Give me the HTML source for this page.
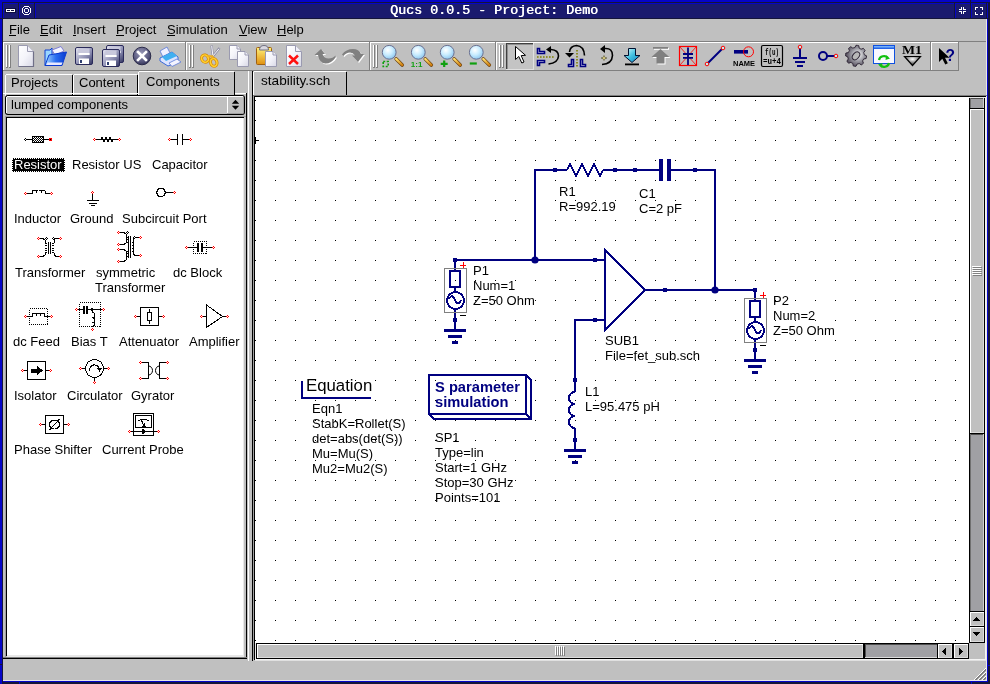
<!DOCTYPE html><html><head><meta charset="utf-8"><style>
*{margin:0;padding:0;box-sizing:border-box}
html,body{width:990px;height:684px;overflow:hidden;background:#c0c0c0;position:relative}
div,span,svg{position:absolute}
.t{font-family:"Liberation Sans",sans-serif;font-size:13px;color:#000;white-space:pre;will-change:transform}
</style></head><body>
<div style="left:0px;top:0px;width:990px;height:684px;background:#0505c8"></div>
<div style="left:988px;top:2px;width:2px;height:682px;background:#15153a"></div>
<div style="left:2px;top:682px;width:988px;height:2px;background:#15153a"></div>
<div style="left:2px;top:2px;width:986px;height:1px;background:#15153a"></div>
<div style="left:2px;top:2px;width:1px;height:680px;background:#15153a"></div>
<div style="left:0px;top:664px;width:2px;height:1px;background:#15153a"></div>
<div style="left:19px;top:682px;width:1px;height:2px;background:#0505c8"></div>
<div style="left:970px;top:0px;width:1px;height:2px;background:#15153a"></div>
<div style="left:986px;top:18px;width:4px;height:1px;background:#15153a"></div>
<div style="left:988px;top:665px;width:2px;height:1px;background:#0505c8"></div>
<div style="left:971px;top:682px;width:1px;height:2px;background:#0505c8"></div>
<div style="left:3px;top:3px;width:984px;height:16px;background:#15153a"></div>
<div style="left:3px;top:3px;width:15px;height:15px;background:#0505c8"></div>
<div style="left:4px;top:4px;width:14px;height:14px;background:#1a1a6e"></div>
<div style="left:19px;top:3px;width:15px;height:15px;background:#0505c8"></div>
<div style="left:20px;top:4px;width:14px;height:14px;background:#1a1a6e"></div>
<div style="left:35px;top:3px;width:919px;height:15px;background:#0505c8"></div>
<div style="left:36px;top:4px;width:918px;height:14px;background:#1a1a6e"></div>
<div style="left:955px;top:3px;width:15px;height:15px;background:#0505c8"></div>
<div style="left:956px;top:4px;width:14px;height:14px;background:#1a1a6e"></div>
<div style="left:971px;top:3px;width:15px;height:15px;background:#0505c8"></div>
<div style="left:972px;top:4px;width:14px;height:14px;background:#1a1a6e"></div>
<div style="left:0px;top:18px;width:3px;height:1px;background:#15153a"></div>
<svg style="left:0px;top:0px" width="990" height="20" shape-rendering="crispEdges"><rect x="5" y="8" width="11" height="5" fill="#0c0c40"/></svg>
<svg style="left:0px;top:0px" width="990" height="20" shape-rendering="crispEdges"><rect x="6" y="9" width="9" height="1" fill="#fff"/><rect x="6" y="11" width="9" height="1" fill="#fff"/><rect x="6" y="9" width="1" height="3" fill="#fff"/><rect x="14" y="9" width="1" height="3" fill="#fff"/><rect x="10" y="10" width="1" height="1" fill="#fff"/></svg>
<svg style="left:0px;top:0px" width="990" height="20" shape-rendering="crispEdges"><rect x="24" y="6" width="5" height="1" fill="#fff"/><rect x="24" y="14" width="5" height="1" fill="#fff"/><rect x="22" y="8" width="1" height="5" fill="#fff"/><rect x="30" y="8" width="1" height="5" fill="#fff"/><rect x="23" y="7" width="1" height="1" fill="#fff"/><rect x="29" y="7" width="1" height="1" fill="#fff"/><rect x="23" y="13" width="1" height="1" fill="#fff"/><rect x="29" y="13" width="1" height="1" fill="#fff"/><rect x="25" y="8" width="3" height="1" fill="#fff"/><rect x="25" y="12" width="3" height="1" fill="#fff"/><rect x="24" y="9" width="1" height="3" fill="#fff"/><rect x="28" y="9" width="1" height="3" fill="#fff"/></svg>
<svg style="left:0px;top:0px" width="990" height="20" shape-rendering="crispEdges"><rect x="961" y="7" width="1" height="3" fill="#fff"/><rect x="959" y="9" width="3" height="1" fill="#fff"/><rect x="963" y="7" width="1" height="3" fill="#fff"/><rect x="963" y="9" width="3" height="1" fill="#fff"/><rect x="961" y="11" width="1" height="3" fill="#fff"/><rect x="959" y="11" width="3" height="1" fill="#fff"/><rect x="963" y="11" width="1" height="3" fill="#fff"/><rect x="963" y="11" width="3" height="1" fill="#fff"/></svg>
<svg style="left:0px;top:0px" width="990" height="20" shape-rendering="crispEdges"><rect x="975" y="7" width="3" height="1" fill="#fff"/><rect x="975" y="7" width="1" height="3" fill="#fff"/><rect x="980" y="7" width="3" height="1" fill="#fff"/><rect x="982" y="7" width="1" height="3" fill="#fff"/><rect x="975" y="14" width="3" height="1" fill="#fff"/><rect x="975" y="12" width="1" height="3" fill="#fff"/><rect x="980" y="14" width="3" height="1" fill="#fff"/><rect x="982" y="12" width="1" height="3" fill="#fff"/></svg>
<span class="t" style="left:390px;top:2.88px;font-size:13.34px;line-height:16px;font-family:'Liberation Mono';color:#fff;font-weight:normal;text-shadow:0.6px 0 0 #fff">Qucs 0.0.5 - Project: Demo</span>
<div style="left:3px;top:19px;width:984px;height:662px;background:#e8e8e8"></div>
<div style="left:3px;top:19px;width:983px;height:661px;background:#c0c0c0"></div>
<div style="left:3px;top:41px;width:983px;height:1px;background:#808080"></div>
<span class="t" style="left:9px;top:21.50px;font-size:13px;line-height:16px;font-family:'Liberation Sans';">File</span>
<span class="t" style="left:40px;top:21.50px;font-size:13px;line-height:16px;font-family:'Liberation Sans';">Edit</span>
<span class="t" style="left:73px;top:21.50px;font-size:13px;line-height:16px;font-family:'Liberation Sans';">Insert</span>
<span class="t" style="left:116px;top:21.50px;font-size:13px;line-height:16px;font-family:'Liberation Sans';">Project</span>
<span class="t" style="left:167px;top:21.50px;font-size:13px;line-height:16px;font-family:'Liberation Sans';">Simulation</span>
<span class="t" style="left:239px;top:21.50px;font-size:13px;line-height:16px;font-family:'Liberation Sans';">View</span>
<span class="t" style="left:277px;top:21.50px;font-size:13px;line-height:16px;font-family:'Liberation Sans';">Help</span>
<div style="left:9px;top:35px;width:7px;height:1px;background:#000"></div>
<div style="left:40px;top:35px;width:8px;height:1px;background:#000"></div>
<div style="left:73px;top:35px;width:3px;height:1px;background:#000"></div>
<div style="left:116px;top:35px;width:8px;height:1px;background:#000"></div>
<div style="left:167px;top:35px;width:8px;height:1px;background:#000"></div>
<div style="left:239px;top:35px;width:8px;height:1px;background:#000"></div>
<div style="left:277px;top:35px;width:9px;height:1px;background:#000"></div>
<div style="left:3px;top:42px;width:183px;height:1px;background:#ffffff"></div>
<div style="left:3px;top:42px;width:1px;height:29px;background:#ffffff"></div>
<div style="left:3px;top:70px;width:183px;height:1px;background:#808080"></div>
<div style="left:185px;top:42px;width:1px;height:29px;background:#808080"></div>
<div style="left:6px;top:45px;width:2px;height:23px;background:#808080"></div>
<div style="left:6px;top:45px;width:1px;height:22px;background:#ffffff"></div>
<div style="left:9px;top:45px;width:2px;height:23px;background:#808080"></div>
<div style="left:9px;top:45px;width:1px;height:22px;background:#ffffff"></div>
<div style="left:186px;top:42px;width:184px;height:1px;background:#ffffff"></div>
<div style="left:186px;top:42px;width:1px;height:29px;background:#ffffff"></div>
<div style="left:186px;top:70px;width:184px;height:1px;background:#808080"></div>
<div style="left:369px;top:42px;width:1px;height:29px;background:#808080"></div>
<div style="left:189px;top:45px;width:2px;height:23px;background:#808080"></div>
<div style="left:189px;top:45px;width:1px;height:22px;background:#ffffff"></div>
<div style="left:192px;top:45px;width:2px;height:23px;background:#808080"></div>
<div style="left:192px;top:45px;width:1px;height:22px;background:#ffffff"></div>
<div style="left:370px;top:42px;width:126px;height:1px;background:#ffffff"></div>
<div style="left:370px;top:42px;width:1px;height:29px;background:#ffffff"></div>
<div style="left:370px;top:70px;width:126px;height:1px;background:#808080"></div>
<div style="left:495px;top:42px;width:1px;height:29px;background:#808080"></div>
<div style="left:373px;top:45px;width:2px;height:23px;background:#808080"></div>
<div style="left:373px;top:45px;width:1px;height:22px;background:#ffffff"></div>
<div style="left:376px;top:45px;width:2px;height:23px;background:#808080"></div>
<div style="left:376px;top:45px;width:1px;height:22px;background:#ffffff"></div>
<div style="left:496px;top:42px;width:435px;height:1px;background:#ffffff"></div>
<div style="left:496px;top:42px;width:1px;height:29px;background:#ffffff"></div>
<div style="left:496px;top:70px;width:435px;height:1px;background:#808080"></div>
<div style="left:930px;top:42px;width:1px;height:29px;background:#808080"></div>
<div style="left:499px;top:45px;width:2px;height:23px;background:#808080"></div>
<div style="left:499px;top:45px;width:1px;height:22px;background:#ffffff"></div>
<div style="left:502px;top:45px;width:2px;height:23px;background:#808080"></div>
<div style="left:502px;top:45px;width:1px;height:22px;background:#ffffff"></div>
<div style="left:931px;top:42px;width:28px;height:1px;background:#ffffff"></div>
<div style="left:931px;top:42px;width:1px;height:29px;background:#ffffff"></div>
<div style="left:931px;top:70px;width:28px;height:1px;background:#808080"></div>
<div style="left:958px;top:42px;width:1px;height:29px;background:#808080"></div>
<div style="left:506px;top:43px;width:28px;height:27px;background:#c4c4c4"></div>
<div style="left:506px;top:43px;width:28px;height:1px;background:#404040"></div>
<div style="left:506px;top:43px;width:1px;height:27px;background:#404040"></div>
<div style="left:506px;top:69px;width:28px;height:1px;background:#e0e0e0"></div>
<div style="left:533px;top:43px;width:1px;height:27px;background:#e0e0e0"></div>
<div style="left:507px;top:44px;width:26px;height:1px;background:#909090"></div>
<div style="left:507px;top:44px;width:1px;height:25px;background:#909090"></div>
<svg style="left:0px;top:0px" width="990" height="72" viewBox="0 0 990 72"><defs>
<linearGradient id="paper" x1="0" y1="0" x2="1" y2="1"><stop offset="0" stop-color="#ffffff"/><stop offset="0.5" stop-color="#f4f4fa"/><stop offset="1" stop-color="#d8d8e6"/></linearGradient>
<linearGradient id="folder" x1="0" y1="0" x2="1" y2="0"><stop offset="0" stop-color="#a8dcff"/><stop offset="0.5" stop-color="#2a6ef0"/><stop offset="1" stop-color="#0a3ad0"/></linearGradient>
<linearGradient id="floppy" x1="0" y1="0" x2="1" y2="1"><stop offset="0" stop-color="#e8e8f4"/><stop offset="0.6" stop-color="#8a8cb0"/><stop offset="1" stop-color="#30325e"/></linearGradient>
<radialGradient id="closeg" cx="0.45" cy="0.35" r="0.7"><stop offset="0" stop-color="#9a9ab8"/><stop offset="0.7" stop-color="#54547a"/><stop offset="1" stop-color="#2a2a4a"/></radialGradient>
<radialGradient id="lens" cx="0.4" cy="0.35" r="0.7"><stop offset="0" stop-color="#ffffff"/><stop offset="0.5" stop-color="#c8ecff"/><stop offset="1" stop-color="#88c4ee"/></radialGradient>
<linearGradient id="gold" x1="0" y1="0" x2="1" y2="1"><stop offset="0" stop-color="#ffe070"/><stop offset="1" stop-color="#d08010"/></linearGradient>
<linearGradient id="clip" x1="0" y1="0" x2="0" y2="1"><stop offset="0" stop-color="#fff27a"/><stop offset="1" stop-color="#e09010"/></linearGradient>
<linearGradient id="cyan" x1="0" y1="0" x2="1" y2="1"><stop offset="0" stop-color="#e0ffff"/><stop offset="0.5" stop-color="#40c0e0"/><stop offset="1" stop-color="#1080c0"/></linearGradient>
<radialGradient id="gear" cx="0.6" cy="0.45" r="0.65"><stop offset="0" stop-color="#ffffff"/><stop offset="0.45" stop-color="#a0a0a8"/><stop offset="1" stop-color="#403848"/></radialGradient>
<radialGradient id="tri" cx="0.5" cy="0.3" r="0.6"><stop offset="0" stop-color="#ffffff"/><stop offset="1" stop-color="#404040"/></radialGradient>
<linearGradient id="winbar" x1="0" y1="0" x2="0" y2="1"><stop offset="0" stop-color="#8ac4ff"/><stop offset="1" stop-color="#1050e0"/></linearGradient>
</defs>
<path d="M18.5 45.5 L27.5 45.5 L33.5 51.5 L33.5 66.5 L18.5 66.5 Z" fill="url(#paper)" stroke="#9a9ab0" stroke-width="1"/>
<path d="M27.5 45.5 L27.5 51.5 L33.5 51.5" fill="#f0f0f8" stroke="#9a9ab0" stroke-width="1"/>
<path d="M18.5 66.5 L33.5 66.5 L33.5 51.5" stroke="#707088" stroke-width="1.2" fill="none"/>
<path d="M45 50 L50 50 L52 48 L52 65.5 L45 65.5 Z" fill="#9ad6ff" stroke="#1040d0" stroke-width="1"/>
<path d="M52 50 L61 46.5 L64 51 L55 55 Z" fill="#f4f4ff" stroke="#6a6ad0" stroke-width="0.8"/>
<path d="M49 55 L66.5 52 L62 65.5 L45 65.5 Z" fill="url(#folder)" stroke="#0a3ad0" stroke-width="1"/>
<path d="M47.5 62.5 L62.5 62.5 L61.5 65 L46.5 65 Z" fill="#e8e8ff"/>
<rect x="75.5" y="47.5" width="17" height="17" rx="1.5" fill="url(#floppy)" stroke="#2a2a5a" stroke-width="1"/>
<rect x="78.5" y="48.5" width="11" height="6.5" fill="#c8c8dc"/>
<rect x="78.5" y="53.0" width="11" height="2" fill="#ffffff"/>
<rect x="79.0" y="58.5" width="10" height="5.5" fill="#ffffff"/>
<rect x="80.0" y="60.0" width="2" height="3" fill="#304070"/>
<rect x="106.5" y="45.5" width="17" height="17" rx="1.5" fill="url(#floppy)" stroke="#2a2a5a" stroke-width="1"/>
<rect x="109.5" y="46.5" width="11" height="6.5" fill="#c8c8dc"/>
<rect x="109.5" y="51.0" width="11" height="2" fill="#ffffff"/>
<rect x="110.0" y="56.5" width="10" height="5.5" fill="#ffffff"/>
<rect x="111.0" y="58.0" width="2" height="3" fill="#304070"/>
<rect x="102.5" y="49.5" width="17" height="17" rx="1.5" fill="url(#floppy)" stroke="#2a2a5a" stroke-width="1"/>
<rect x="105.5" y="50.5" width="11" height="6.5" fill="#c8c8dc"/>
<rect x="105.5" y="55.0" width="11" height="2" fill="#ffffff"/>
<rect x="106.0" y="60.5" width="10" height="5.5" fill="#ffffff"/>
<rect x="107.0" y="62.0" width="2" height="3" fill="#304070"/>
<circle cx="142" cy="56" r="8.8" fill="url(#closeg)" stroke="#2a2a4a" stroke-width="1"/>
<path d="M138 52 L146 60 M146 52 L138 60" stroke="#ffffff" stroke-width="2.6" stroke-linecap="square"/>
<path d="M160 51 L167 47 L171 55 L164 59 Z" fill="#f0f0ff" stroke="#5a7ad8" stroke-width="0.8"/>
<path d="M160 58 L172 52 L178 57 L178 62 L168 66 L160 61 Z" fill="#dde4ff" stroke="#3a6ad8" stroke-width="1"/>
<path d="M162 57 L172 52 L177 56 L166 61 Z" fill="#40b0f0"/>
<path d="M169 63 L177 59 L181 62 L172 66.5 Z" fill="#f4f4ff" stroke="#5a7ad8" stroke-width="0.8"/>
<path d="M211.5 45.5 L213 56.5" stroke="#9090a8" stroke-width="2.4" fill="none"/>
<path d="M219.5 48 L212 57.5" stroke="#9090a8" stroke-width="2.4" fill="none"/>
<path d="M211.7 46 L212.8 55 M219 48.8 L213 56" stroke="#ffffff" stroke-width="0.9" fill="none"/>
<ellipse cx="205" cy="58.6" rx="3.3" ry="3.8" transform="rotate(-35 205 58.6)" fill="none" stroke="#d88a00" stroke-width="3"/>
<ellipse cx="205" cy="58.6" rx="3.3" ry="3.8" transform="rotate(-35 205 58.6)" fill="none" stroke="#ffd030" stroke-width="1.6"/>
<ellipse cx="213.7" cy="62.4" rx="3.2" ry="4" transform="rotate(-20 213.7 62.4)" fill="none" stroke="#d88a00" stroke-width="3"/>
<ellipse cx="213.7" cy="62.4" rx="3.2" ry="4" transform="rotate(-20 213.7 62.4)" fill="none" stroke="#ffd030" stroke-width="1.6"/>
<path d="M207.5 56 L212.5 56.5 L212.5 58.5" stroke="#f0b020" stroke-width="2.2" fill="none"/>
<path d="M229.5 45.5 L237.0 45.5 L240.5 49.0 L240.5 59.5 L229.5 59.5 Z" fill="url(#paper)" stroke="#9a9ab0" stroke-width="1"/>
<path d="M237.0 45.5 L237.0 49.0 L240.5 49.0" fill="#f0f0f8" stroke="#9a9ab0" stroke-width="1"/>
<path d="M237.5 51.5 L245.0 51.5 L248.5 55.0 L248.5 66.5 L237.5 66.5 Z" fill="url(#paper)" stroke="#9a9ab0" stroke-width="1"/>
<path d="M245.0 51.5 L245.0 55.0 L248.5 55.0" fill="#f0f0f8" stroke="#9a9ab0" stroke-width="1"/>
<rect x="256.5" y="47.5" width="15" height="17" rx="1" fill="url(#clip)" stroke="#a06010" stroke-width="1"/>
<path d="M259.5 50 Q259.5 45.5 264 45.5 Q268.5 45.5 268.5 50 Z" fill="#d8d8e0" stroke="#707080" stroke-width="1"/>
<path d="M265.5 51.5 L273.0 51.5 L276.5 55.0 L276.5 66.5 L265.5 66.5 Z" fill="url(#paper)" stroke="#9a9ab0" stroke-width="1"/>
<path d="M273.0 51.5 L273.0 55.0 L276.5 55.0" fill="#f0f0f8" stroke="#9a9ab0" stroke-width="1"/>
<path d="M286.5 45.5 L295.5 45.5 L301.5 51.5 L301.5 66.5 L286.5 66.5 Z" fill="url(#paper)" stroke="#9a9ab0" stroke-width="1"/>
<path d="M295.5 45.5 L295.5 51.5 L301.5 51.5" fill="#f0f0f8" stroke="#9a9ab0" stroke-width="1"/>
<path d="M289 55.5 L298 64 M298 55.5 L289 64" stroke="#ff1010" stroke-width="2.5"/>
<g transform="translate(314.5,49)"><path d="M0 6 L6.5 0 L10.5 5 L8 5 Q10 9.5 14 9.5 Q18.5 9.5 21 6.5 L21 8.5 Q17 14.5 11 14.5 Q5 14.5 3.5 6 Z" transform="translate(1,1)" fill="#ffffff"/><path d="M0 6 L6.5 0 L10.5 5 L8 5 Q10 9.5 14 9.5 Q18.5 9.5 21 6.5 L21 8.5 Q17 14.5 11 14.5 Q5 14.5 3.5 6 Z" fill="#808080"/></g>
<g transform="translate(342,49)"><path d="M0 5.5 Q4 0 11 0 Q17 0 19 5 L22 5 L16 13 L10 6.5 L13 6.5 Q11 3.5 8 3.5 Q4 3.5 1.5 7 Z" transform="translate(1,1)" fill="#fff"/><path d="M0 5.5 Q4 0 11 0 Q17 0 19 5 L22 5 L16 13 L10 6.5 L13 6.5 Q11 3.5 8 3.5 Q4 3.5 1.5 7 Z" fill="#808080"/></g>
<path d="M396.2 59 L402.2 65" stroke="#6a4010" stroke-width="3.6" stroke-linecap="round"/>
<path d="M396.2 59 L402.2 65" stroke="url(#gold)" stroke-width="2.4" stroke-linecap="round"/>
<circle cx="389.2" cy="52.3" r="6.9" fill="url(#lens)" stroke="#6a7090" stroke-width="1"/>
<rect x="383.2" y="61.5" width="5" height="5" fill="none" stroke="#10a010" stroke-width="1.6" stroke-dasharray="2 1.5"/>
<path d="M425.3 59 L431.3 65" stroke="#6a4010" stroke-width="3.6" stroke-linecap="round"/>
<path d="M425.3 59 L431.3 65" stroke="url(#gold)" stroke-width="2.4" stroke-linecap="round"/>
<circle cx="418.3" cy="52.3" r="6.9" fill="url(#lens)" stroke="#6a7090" stroke-width="1"/>
<text x="410.8" y="67" font-family="Liberation Sans" font-weight="bold" font-size="8" fill="#10a010">1:1</text>
<path d="M454.2 59 L460.2 65" stroke="#6a4010" stroke-width="3.6" stroke-linecap="round"/>
<path d="M454.2 59 L460.2 65" stroke="url(#gold)" stroke-width="2.4" stroke-linecap="round"/>
<circle cx="447.2" cy="52.3" r="6.9" fill="url(#lens)" stroke="#6a7090" stroke-width="1"/>
<path d="M444.2 60.5 L444.2 67 M440.7 63.8 L447.7 63.8" stroke="#10a010" stroke-width="2.2"/>
<path d="M483.3 59 L489.3 65" stroke="#6a4010" stroke-width="3.6" stroke-linecap="round"/>
<path d="M483.3 59 L489.3 65" stroke="url(#gold)" stroke-width="2.4" stroke-linecap="round"/>
<circle cx="476.3" cy="52.3" r="6.9" fill="url(#lens)" stroke="#6a7090" stroke-width="1"/>
<path d="M469.8 63.5 L476.8 63.5" stroke="#10a010" stroke-width="2.2"/>
<path d="M515.5 46.5 L515.5 59.5 L518.8 56.5 L521.8 63 L524 62 L521.2 55.6 L525.5 55.3 Z" fill="#ffffff" stroke="#000" stroke-width="1"/>
<path d="M537.5 48.5 L539.5 48.5 L539.5 51.5 L544.5 51.5 L544.5 53.5 L537.5 53.5 Z" fill="#fff" stroke="#000080" stroke-width="1.6"/>
<path d="M537.5 65.5 L539.5 65.5 L539.5 62.5 L544.5 62.5 L544.5 60.5 L537.5 60.5 Z" fill="#fff" stroke="#000080" stroke-width="1.6"/>
<path d="M537 57 L554 57" stroke="#808000" stroke-width="1.6" stroke-dasharray="1.6 1.4"/>
<path d="M548.5 64 Q558 63 558.5 56 Q558.5 50 551 49.5" stroke="#000" stroke-width="1.6" fill="none"/>
<path d="M546 49.5 L551 46 L551 53 Z" fill="#000"/>
<path d="M573.5 59.5 L573.5 66.5 L568.5 66.5 L568.5 64.5 L571.5 64.5 L571.5 59.5 Z" fill="#fff" stroke="#000080" stroke-width="1.6"/>
<path d="M580.5 59.5 L580.5 66.5 L585.5 66.5 L585.5 64.5 L582.5 64.5 L582.5 59.5 Z" fill="#fff" stroke="#000080" stroke-width="1.6"/>
<path d="M577 50 L577 67" stroke="#808000" stroke-width="1.6" stroke-dasharray="1.6 1.4"/>
<path d="M584.5 55.5 Q584 46 576.5 45.5 Q570 46 569.5 52" stroke="#000" stroke-width="1.6" fill="none"/>
<path d="M565 53 L574 53 L569.5 57.5 Z" fill="#000"/>
<path d="M602 64.5 Q612 64 612.5 55.5 Q612.5 48 605 48.5" stroke="#000" stroke-width="1.6" fill="none"/>
<path d="M600 49 L605 45 L605 53 Z" fill="#000"/>
<path d="M604 55.5 L605 57.5 L607 58 L605 58.7 L604 60.5 L603 58.7 L601 58 L603 57.5 Z" fill="#e0d080" stroke="#404020" stroke-width="0.5"/>
<path d="M628.5 48.5 L635.5 48.5 L635.5 55.5 L640 55.5 L632 62.5 L624 55.5 L628.5 55.5 Z" fill="url(#cyan)" stroke="#001030" stroke-width="1"/>
<rect x="625" y="63.5" width="14" height="1.8" fill="#000"/>
<g transform="translate(1,1)"><rect x="653" y="47" width="15" height="1.8" fill="#fff"/><path d="M651.5 57 L660.5 49 L669.5 57 L664.5 57 L664.5 63.5 L656.5 63.5 L656.5 57 Z" fill="#fff"/></g>
<g transform="translate(0,0)"><rect x="653" y="47" width="15" height="1.8" fill="#808080"/><path d="M651.5 57 L660.5 49 L669.5 57 L664.5 57 L664.5 63.5 L656.5 63.5 L656.5 57 Z" fill="#808080"/></g>
<rect x="679.5" y="46.5" width="17" height="19" fill="none" stroke="#ff0000" stroke-width="1.2"/>
<path d="M680 47 L696 65 M696 47 L680 65" stroke="#ff0000" stroke-width="0.8"/>
<path d="M688 47.5 L688 65 M683 54 L693 54 M683 57.8 L693 57.8" stroke="#000080" stroke-width="1.8"/>
<path d="M707.5 63.5 L723 48" stroke="#000080" stroke-width="2"/>
<circle cx="707" cy="64" r="1.8" fill="#c0f0f0" stroke="#ff0000" stroke-width="1"/>
<circle cx="723" cy="48" r="1.8" fill="#c0f0f0" stroke="#ff0000" stroke-width="1"/>
<rect x="734" y="50" width="14" height="3.6" fill="#000080"/>
<circle cx="748.5" cy="51.8" r="5" fill="none" stroke="#ff0000" stroke-width="1"/>
<text x="733" y="66" font-family="Liberation Sans" font-weight="bold" font-size="7.6" fill="#000" textLength="22" lengthAdjust="spacingAndGlyphs">NAME</text>
<rect x="761.5" y="45.5" width="21" height="21" rx="1.5" fill="none" stroke="#000" stroke-width="1.2"/>
<text x="765" y="55" font-family="Liberation Mono" font-weight="bold" font-size="8.5" fill="#000" textLength="14" lengthAdjust="spacingAndGlyphs">f(u)</text>
<text x="763" y="64" font-family="Liberation Mono" font-weight="bold" font-size="8.5" fill="#000" textLength="18" lengthAdjust="spacingAndGlyphs">=u+4</text>
<path d="M800 48 L800 58 M793 58 L807 58 M795 62 L805 62 M797 66 L803 66" stroke="#000080" stroke-width="2"/>
<circle cx="800" cy="47" r="1.8" fill="#c0f0f0" stroke="#ff0000" stroke-width="1"/>
<circle cx="823" cy="56" r="4" fill="none" stroke="#000080" stroke-width="2"/>
<path d="M827 56 L834 56" stroke="#000080" stroke-width="2"/>
<circle cx="836" cy="56" r="1.8" fill="#c0f0f0" stroke="#ff0000" stroke-width="1"/>
<path d="M866.50 55.80 L866.41 57.17 L866.14 58.52 L863.67 58.98 L863.19 59.95 L862.58 60.85 L863.42 63.22 L862.39 64.13 L861.25 64.89 L859.18 63.47 L858.15 63.82 L857.08 64.03 L856.00 66.30 L854.63 66.21 L853.28 65.94 L852.82 63.47 L851.85 62.99 L850.95 62.38 L848.58 63.22 L847.67 62.19 L846.91 61.05 L848.33 58.98 L847.98 57.95 L847.77 56.88 L845.50 55.80 L845.59 54.43 L845.86 53.08 L848.33 52.62 L848.81 51.65 L849.42 50.75 L848.58 48.38 L849.61 47.47 L850.75 46.71 L852.82 48.13 L853.85 47.78 L854.92 47.57 L856.00 45.30 L857.37 45.39 L858.72 45.66 L859.18 48.13 L860.15 48.61 L861.05 49.22 L863.42 48.38 L864.33 49.41 L865.09 50.55 L863.67 52.62 L864.02 53.65 L864.23 54.72 Z" fill="url(#gear)" stroke="#302838" stroke-width="1"/>
<ellipse cx="856" cy="55.8" rx="3" ry="4.5" transform="rotate(40 856 55.8)" fill="#b8b8b8" stroke="#302838" stroke-width="1"/>
<rect x="873.5" y="45.5" width="21" height="18" fill="#f8f8ff" stroke="#1050e0" stroke-width="1"/>
<rect x="874" y="46" width="20" height="3" fill="url(#winbar)"/>
<path d="M879 60 A5 4.5 0 0 1 888 58" stroke="#10c010" stroke-width="2.2" fill="none"/><path d="M886 55.5 L890 58.5 L885.5 60 Z" fill="#10c010"/>
<path d="M889 63 A5 4.5 0 0 1 880 65" stroke="#10c010" stroke-width="2.2" fill="none"/><path d="M882 67.5 L878 64.5 L882.5 63 Z" fill="#10c010"/>
<text x="902" y="54" font-family="Liberation Serif" font-weight="bold" font-size="12.5" fill="#000" textLength="20" lengthAdjust="spacingAndGlyphs">M1</text>
<path d="M904.5 56.5 L920.5 56.5 L912.5 65.5 Z" fill="url(#tri)" stroke="#000" stroke-width="1.2"/>
<path d="M939 48 L939 62 L942.3 58.8 L945.3 64.5 L947.8 63.3 L945 57.8 L949.5 57.8 Z" fill="#000"/>
<text x="945.5" y="61" font-family="Liberation Sans" font-weight="bold" font-size="16" fill="#000080" textLength="9.5" lengthAdjust="spacingAndGlyphs">?</text></svg>
<div style="left:5px;top:74px;width:68px;height:22px;background:#c0c0c0"></div>
<div style="left:6px;top:74px;width:66px;height:1px;background:#ffffff"></div>
<div style="left:5px;top:75px;width:1px;height:22px;background:#ffffff"></div>
<div style="left:72px;top:75px;width:1px;height:21px;background:#000"></div>
<span class="t" style="left:11px;top:74.50px;font-size:13px;line-height:16px;font-family:'Liberation Sans';">Projects</span>
<div style="left:73px;top:74px;width:65px;height:22px;background:#c0c0c0"></div>
<div style="left:74px;top:74px;width:63px;height:1px;background:#ffffff"></div>
<div style="left:73px;top:75px;width:1px;height:22px;background:#ffffff"></div>
<div style="left:137px;top:75px;width:1px;height:21px;background:#000"></div>
<span class="t" style="left:79px;top:74.50px;font-size:13px;line-height:16px;font-family:'Liberation Sans';">Content</span>
<div style="left:138px;top:71px;width:97px;height:25px;background:#c0c0c0"></div>
<div style="left:139px;top:71px;width:95px;height:1px;background:#ffffff"></div>
<div style="left:138px;top:72px;width:1px;height:25px;background:#ffffff"></div>
<div style="left:234px;top:72px;width:1px;height:24px;background:#000"></div>
<span class="t" style="left:146px;top:73.50px;font-size:13px;line-height:16px;font-family:'Liberation Sans';">Components</span>
<div style="left:5px;top:95px;width:240px;height:20px;background:#000;border-radius:3px"></div>
<div style="left:6px;top:96px;width:238px;height:18px;background:#c0c0c0;border-radius:2px"></div>
<div style="left:7px;top:96px;width:220px;height:1px;background:#ffffff"></div>
<div style="left:6px;top:97px;width:1px;height:16px;background:#ffffff"></div>
<div style="left:227px;top:96px;width:17px;height:18px;background:#a0a0a0;border-radius:0 2px 2px 0"></div>
<div style="left:227px;top:96px;width:16px;height:17px;background:#c0c0c0"></div>
<div style="left:227px;top:96px;width:16px;height:1px;background:#ffffff"></div>
<div style="left:227px;top:96px;width:1px;height:17px;background:#ffffff"></div>
<span class="t" style="left:11px;top:96.50px;font-size:13px;line-height:16px;font-family:'Liberation Sans';">lumped components</span>
<svg style="left:228px;top:97px" width="14" height="16"><path d="M3.8 6.8 L7.5 2.8 L11.2 6.8 Z M3.8 8.8 L7.5 12.8 L11.2 8.8 Z" fill="#000"/></svg>
<div style="left:3px;top:93px;width:136px;height:1px;background:#ffffff"></div>
<div style="left:235px;top:93px;width:11px;height:1px;background:#ffffff"></div>
<div style="left:246px;top:93px;width:1px;height:566px;background:#000"></div>
<div style="left:3px;top:658px;width:244px;height:1px;background:#000"></div>
<div style="left:5px;top:116px;width:241px;height:542px;background:#a0a0a0"></div>
<div style="left:6px;top:117px;width:240px;height:541px;background:#c0c0c0"></div>
<div style="left:6px;top:117px;width:238px;height:539px;background:#000"></div>
<div style="left:7px;top:118px;width:237px;height:537px;background:#fff"></div>
<div style="left:7px;top:655px;width:237px;height:2px;background:#e8e8e8"></div>
<div style="left:243px;top:118px;width:1px;height:539px;background:#e8e8e8"></div>
<div style="left:3px;top:657px;width:244px;height:1px;background:#808080"></div>
<div style="left:3px;top:658px;width:244px;height:1px;background:#000"></div>
<svg style="left:0px;top:0px" width="250" height="660" viewBox="0 0 250 660" shape-rendering="crispEdges"><defs><pattern id="chk" x="0" y="0" width="2" height="2" patternUnits="userSpaceOnUse"><rect width="2" height="2" fill="#000"/><rect x="0" y="0" width="1" height="1" fill="#fff"/><rect x="1" y="1" width="1" height="1" fill="#fff"/></pattern></defs>
<line x1="27" y1="139.5" x2="32" y2="139.5" stroke="#000" stroke-width="1"/>
<line x1="44" y1="139.5" x2="49" y2="139.5" stroke="#000" stroke-width="1"/>
<rect x="32" y="136" width="12" height="7" fill="#000"/>
<rect x="33" y="137" width="10" height="5" fill="url(#chk)"/>
<rect x="25" y="139" width="1" height="1" fill="#fff"/>
<rect x="24" y="139" width="1" height="1" fill="#000"/>
<rect x="26" y="139" width="1" height="1" fill="#000"/>
<rect x="25" y="138" width="1" height="1" fill="#000"/>
<rect x="25" y="140" width="1" height="1" fill="#000"/>
<rect x="50" y="139" width="1" height="1" fill="#fff"/>
<rect x="49" y="139" width="1" height="1" fill="#ff0000"/>
<rect x="51" y="139" width="1" height="1" fill="#ff0000"/>
<rect x="50" y="138" width="1" height="1" fill="#ff0000"/>
<rect x="50" y="140" width="1" height="1" fill="#ff0000"/>
<rect x="49" y="138" width="3" height="3" fill="#f00"/><rect x="50" y="139" width="1" height="1" fill="#000"/>
<line x1="96" y1="139.5" x2="101" y2="139.5" stroke="#000" stroke-width="1"/>
<line x1="113" y1="139.5" x2="118" y2="139.5" stroke="#000" stroke-width="1"/>
<path d="M101 139.5 L102 137 L104 142 L106 137 L108 142 L110 137 L112 142 L113 139.5" stroke="#000" stroke-width="1" fill="none" />
<rect x="94" y="139" width="1" height="1" fill="#fff"/>
<rect x="93" y="139" width="1" height="1" fill="#ff0000"/>
<rect x="95" y="139" width="1" height="1" fill="#ff0000"/>
<rect x="94" y="138" width="1" height="1" fill="#ff0000"/>
<rect x="94" y="140" width="1" height="1" fill="#ff0000"/>
<rect x="119" y="139" width="1" height="1" fill="#fff"/>
<rect x="118" y="139" width="1" height="1" fill="#ff0000"/>
<rect x="120" y="139" width="1" height="1" fill="#ff0000"/>
<rect x="119" y="138" width="1" height="1" fill="#ff0000"/>
<rect x="119" y="140" width="1" height="1" fill="#ff0000"/>
<line x1="171" y1="139.5" x2="177.5" y2="139.5" stroke="#000" stroke-width="1"/>
<line x1="182.5" y1="139.5" x2="189" y2="139.5" stroke="#000" stroke-width="1"/>
<line x1="177.5" y1="134" x2="177.5" y2="145" stroke="#000" stroke-width="1.5"/>
<line x1="182.5" y1="134" x2="182.5" y2="145" stroke="#000" stroke-width="1.5"/>
<rect x="169" y="139" width="1" height="1" fill="#fff"/>
<rect x="168" y="139" width="1" height="1" fill="#ff0000"/>
<rect x="170" y="139" width="1" height="1" fill="#ff0000"/>
<rect x="169" y="138" width="1" height="1" fill="#ff0000"/>
<rect x="169" y="140" width="1" height="1" fill="#ff0000"/>
<rect x="190" y="139" width="1" height="1" fill="#fff"/>
<rect x="189" y="139" width="1" height="1" fill="#ff0000"/>
<rect x="191" y="139" width="1" height="1" fill="#ff0000"/>
<rect x="190" y="138" width="1" height="1" fill="#ff0000"/>
<rect x="190" y="140" width="1" height="1" fill="#ff0000"/>
<line x1="27" y1="193.5" x2="32" y2="193.5" stroke="#000" stroke-width="1"/>
<line x1="45" y1="193.5" x2="50" y2="193.5" stroke="#000" stroke-width="1"/>
<path d="M32 193.5 L32 191 Q33 189.5 36.5 190.5 L36.5 193 M36.5 190.5 Q38 189.5 41 190.5 L41 193 M41 190.5 Q43 189.5 45 191 L45 193.5" stroke="#000" stroke-width="1" fill="none" />
<rect x="25" y="193" width="1" height="1" fill="#fff"/>
<rect x="24" y="193" width="1" height="1" fill="#ff0000"/>
<rect x="26" y="193" width="1" height="1" fill="#ff0000"/>
<rect x="25" y="192" width="1" height="1" fill="#ff0000"/>
<rect x="25" y="194" width="1" height="1" fill="#ff0000"/>
<rect x="51" y="193" width="1" height="1" fill="#fff"/>
<rect x="50" y="193" width="1" height="1" fill="#ff0000"/>
<rect x="52" y="193" width="1" height="1" fill="#ff0000"/>
<rect x="51" y="192" width="1" height="1" fill="#ff0000"/>
<rect x="51" y="194" width="1" height="1" fill="#ff0000"/>
<line x1="92.5" y1="194" x2="92.5" y2="200" stroke="#000" stroke-width="1"/>
<line x1="86.5" y1="200.5" x2="98.5" y2="200.5" stroke="#000" stroke-width="1"/>
<line x1="88.5" y1="203.5" x2="96.5" y2="203.5" stroke="#000" stroke-width="1"/>
<line x1="90.5" y1="205.5" x2="94.5" y2="205.5" stroke="#000" stroke-width="1"/>
<rect x="92" y="192" width="1" height="1" fill="#fff"/>
<rect x="91" y="192" width="1" height="1" fill="#ff0000"/>
<rect x="93" y="192" width="1" height="1" fill="#ff0000"/>
<rect x="92" y="191" width="1" height="1" fill="#ff0000"/>
<rect x="92" y="193" width="1" height="1" fill="#ff0000"/>
<circle cx="161" cy="192.5" r="4.2" stroke="#000" stroke-width="1.2" fill="none"/>
<line x1="165.2" y1="192.5" x2="173" y2="192.5" stroke="#000" stroke-width="1"/>
<rect x="174" y="192" width="1" height="1" fill="#fff"/>
<rect x="173" y="192" width="1" height="1" fill="#ff0000"/>
<rect x="175" y="192" width="1" height="1" fill="#ff0000"/>
<rect x="174" y="191" width="1" height="1" fill="#ff0000"/>
<rect x="174" y="193" width="1" height="1" fill="#ff0000"/>
<path d="M39.5 238.5 L43 238.5 L45 240 L45 243 M54 243 L54 240 L56 238.5 L59.5 238.5 M39.5 256.5 L43 256.5 L45 255 L45 252.5 M54 252.5 L54 255 L56 256.5 L59.5 256.5" stroke="#000" stroke-width="1" fill="none" />
<path d="M45 243 L47 243 M45 245.5 L47 245.5 M45 248 L47 248 M45 250.5 L47 250.5 M45 252.5 L47 252.5" stroke="#000" stroke-width="1" fill="none" />
<path d="M52 243 L54 243 M52 245.5 L54 245.5 M52 248 L54 248 M52 250.5 L54 250.5 M52 252.5 L54 252.5" stroke="#000" stroke-width="1" fill="none" />
<line x1="48.5" y1="242" x2="48.5" y2="254" stroke="#000" stroke-width="1"/>
<line x1="50.5" y1="242" x2="50.5" y2="254" stroke="#000" stroke-width="1"/>
<rect x="38" y="238" width="1" height="1" fill="#fff"/>
<rect x="37" y="238" width="1" height="1" fill="#ff0000"/>
<rect x="39" y="238" width="1" height="1" fill="#ff0000"/>
<rect x="38" y="237" width="1" height="1" fill="#ff0000"/>
<rect x="38" y="239" width="1" height="1" fill="#ff0000"/>
<rect x="60" y="238" width="1" height="1" fill="#fff"/>
<rect x="59" y="238" width="1" height="1" fill="#ff0000"/>
<rect x="61" y="238" width="1" height="1" fill="#ff0000"/>
<rect x="60" y="237" width="1" height="1" fill="#ff0000"/>
<rect x="60" y="239" width="1" height="1" fill="#ff0000"/>
<rect x="38" y="256" width="1" height="1" fill="#fff"/>
<rect x="37" y="256" width="1" height="1" fill="#ff0000"/>
<rect x="39" y="256" width="1" height="1" fill="#ff0000"/>
<rect x="38" y="255" width="1" height="1" fill="#ff0000"/>
<rect x="38" y="257" width="1" height="1" fill="#ff0000"/>
<rect x="60" y="256" width="1" height="1" fill="#fff"/>
<rect x="59" y="256" width="1" height="1" fill="#ff0000"/>
<rect x="61" y="256" width="1" height="1" fill="#ff0000"/>
<rect x="60" y="255" width="1" height="1" fill="#ff0000"/>
<rect x="60" y="257" width="1" height="1" fill="#ff0000"/>
<rect x="46" y="238" width="1" height="1" fill="#fff"/>
<rect x="45" y="238" width="1" height="1" fill="#000"/>
<rect x="47" y="238" width="1" height="1" fill="#000"/>
<rect x="46" y="237" width="1" height="1" fill="#000"/>
<rect x="46" y="239" width="1" height="1" fill="#000"/>
<rect x="53" y="238" width="1" height="1" fill="#fff"/>
<rect x="52" y="238" width="1" height="1" fill="#000"/>
<rect x="54" y="238" width="1" height="1" fill="#000"/>
<rect x="53" y="237" width="1" height="1" fill="#000"/>
<rect x="53" y="239" width="1" height="1" fill="#000"/>
<path d="M120 232.5 L124 232.5 L126 234 L126 237 M120 244.5 L124 244.5 L126 243 L126 237 M120 249.5 L124 249.5 L126 251 L126 256 M120 261.5 L124 261.5 L126 260 L126 256" stroke="#000" stroke-width="1" fill="none" />
<path d="M126 237 L127.5 237 M126 239.5 L127.5 239.5 M126 242 L127.5 242 M126 251 L127.5 251 M126 253.5 L127.5 253.5 M126 256 L127.5 256" stroke="#000" stroke-width="1" fill="none" />
<line x1="128.5" y1="236" x2="128.5" y2="258" stroke="#000" stroke-width="1"/>
<line x1="130.5" y1="236" x2="130.5" y2="258" stroke="#000" stroke-width="1"/>
<path d="M139 237.5 L135 237.5 L133 239 L133 242 M139 255.5 L135 255.5 L133 254 L133 251 M131.5 242 L133 242 M131.5 245 L133 245 M131.5 248 L133 248 M131.5 251 L133 251 L133 242" stroke="#000" stroke-width="1" fill="none" />
<rect x="118" y="232" width="1" height="1" fill="#fff"/>
<rect x="117" y="232" width="1" height="1" fill="#ff0000"/>
<rect x="119" y="232" width="1" height="1" fill="#ff0000"/>
<rect x="118" y="231" width="1" height="1" fill="#ff0000"/>
<rect x="118" y="233" width="1" height="1" fill="#ff0000"/>
<rect x="118" y="244" width="1" height="1" fill="#fff"/>
<rect x="117" y="244" width="1" height="1" fill="#ff0000"/>
<rect x="119" y="244" width="1" height="1" fill="#ff0000"/>
<rect x="118" y="243" width="1" height="1" fill="#ff0000"/>
<rect x="118" y="245" width="1" height="1" fill="#ff0000"/>
<rect x="118" y="249" width="1" height="1" fill="#fff"/>
<rect x="117" y="249" width="1" height="1" fill="#ff0000"/>
<rect x="119" y="249" width="1" height="1" fill="#ff0000"/>
<rect x="118" y="248" width="1" height="1" fill="#ff0000"/>
<rect x="118" y="250" width="1" height="1" fill="#ff0000"/>
<rect x="118" y="261" width="1" height="1" fill="#fff"/>
<rect x="117" y="261" width="1" height="1" fill="#ff0000"/>
<rect x="119" y="261" width="1" height="1" fill="#ff0000"/>
<rect x="118" y="260" width="1" height="1" fill="#ff0000"/>
<rect x="118" y="262" width="1" height="1" fill="#ff0000"/>
<rect x="140" y="237" width="1" height="1" fill="#fff"/>
<rect x="139" y="237" width="1" height="1" fill="#ff0000"/>
<rect x="141" y="237" width="1" height="1" fill="#ff0000"/>
<rect x="140" y="236" width="1" height="1" fill="#ff0000"/>
<rect x="140" y="238" width="1" height="1" fill="#ff0000"/>
<rect x="140" y="255" width="1" height="1" fill="#fff"/>
<rect x="139" y="255" width="1" height="1" fill="#ff0000"/>
<rect x="141" y="255" width="1" height="1" fill="#ff0000"/>
<rect x="140" y="254" width="1" height="1" fill="#ff0000"/>
<rect x="140" y="256" width="1" height="1" fill="#ff0000"/>
<rect x="127" y="232" width="1" height="1" fill="#fff"/>
<rect x="126" y="232" width="1" height="1" fill="#000"/>
<rect x="128" y="232" width="1" height="1" fill="#000"/>
<rect x="127" y="231" width="1" height="1" fill="#000"/>
<rect x="127" y="233" width="1" height="1" fill="#000"/>
<rect x="134" y="237" width="1" height="1" fill="#fff"/>
<rect x="133" y="237" width="1" height="1" fill="#000"/>
<rect x="135" y="237" width="1" height="1" fill="#000"/>
<rect x="134" y="236" width="1" height="1" fill="#000"/>
<rect x="134" y="238" width="1" height="1" fill="#000"/>
<line x1="188" y1="247.5" x2="198" y2="247.5" stroke="#000" stroke-width="1"/>
<line x1="202" y1="247.5" x2="212" y2="247.5" stroke="#000" stroke-width="1"/>
<line x1="198" y1="243" x2="198" y2="252" stroke="#000" stroke-width="1.5"/>
<line x1="202" y1="243" x2="202" y2="252" stroke="#000" stroke-width="1.5"/>
<rect x="193.5" y="241.5" width="13" height="12" stroke="#000" stroke-width="1" fill="none" stroke-dasharray="1 1"/>
<rect x="186" y="247" width="1" height="1" fill="#fff"/>
<rect x="185" y="247" width="1" height="1" fill="#ff0000"/>
<rect x="187" y="247" width="1" height="1" fill="#ff0000"/>
<rect x="186" y="246" width="1" height="1" fill="#ff0000"/>
<rect x="186" y="248" width="1" height="1" fill="#ff0000"/>
<rect x="213" y="247" width="1" height="1" fill="#fff"/>
<rect x="212" y="247" width="1" height="1" fill="#ff0000"/>
<rect x="214" y="247" width="1" height="1" fill="#ff0000"/>
<rect x="213" y="246" width="1" height="1" fill="#ff0000"/>
<rect x="213" y="248" width="1" height="1" fill="#ff0000"/>
<rect x="29.5" y="308.5" width="18" height="16" stroke="#000" stroke-width="1" fill="none" stroke-dasharray="1 1"/>
<line x1="27" y1="316.5" x2="32.5" y2="316.5" stroke="#000" stroke-width="1"/>
<line x1="44.5" y1="316.5" x2="50" y2="316.5" stroke="#000" stroke-width="1"/>
<path d="M32.5 316.5 L32.5 314 Q34 313 36.5 314 L36.5 316 M36.5 314 Q38.5 313 40.5 314 L40.5 316 M40.5 314 Q42.5 313 44.5 314 L44.5 316.5" stroke="#000" stroke-width="1" fill="none" />
<rect x="25" y="316" width="1" height="1" fill="#fff"/>
<rect x="24" y="316" width="1" height="1" fill="#ff0000"/>
<rect x="26" y="316" width="1" height="1" fill="#ff0000"/>
<rect x="25" y="315" width="1" height="1" fill="#ff0000"/>
<rect x="25" y="317" width="1" height="1" fill="#ff0000"/>
<rect x="51" y="316" width="1" height="1" fill="#fff"/>
<rect x="50" y="316" width="1" height="1" fill="#ff0000"/>
<rect x="52" y="316" width="1" height="1" fill="#ff0000"/>
<rect x="51" y="315" width="1" height="1" fill="#ff0000"/>
<rect x="51" y="317" width="1" height="1" fill="#ff0000"/>
<rect x="79.5" y="302.5" width="21" height="24" stroke="#000" stroke-width="1" fill="none" stroke-dasharray="1 1"/>
<line x1="77.5" y1="309.5" x2="84" y2="309.5" stroke="#000" stroke-width="1"/>
<line x1="87" y1="309.5" x2="102" y2="309.5" stroke="#000" stroke-width="1"/>
<line x1="84" y1="305.5" x2="84" y2="313.5" stroke="#000" stroke-width="1.5"/>
<line x1="87" y1="305.5" x2="87" y2="313.5" stroke="#000" stroke-width="1.5"/>
<circle cx="92" cy="309.5" r="1.3" fill="#000"/>
<path d="M92 309.5 L92 312 Q95 313 95 315.5 Q95 317.5 92.5 317.5 Q95 318 95 320.5 Q95 322.5 92.5 322.5 Q95 323 95 325 L92 327" stroke="#000" stroke-width="1" fill="none" />
<rect x="76" y="309" width="1" height="1" fill="#fff"/>
<rect x="75" y="309" width="1" height="1" fill="#ff0000"/>
<rect x="77" y="309" width="1" height="1" fill="#ff0000"/>
<rect x="76" y="308" width="1" height="1" fill="#ff0000"/>
<rect x="76" y="310" width="1" height="1" fill="#ff0000"/>
<rect x="103" y="309" width="1" height="1" fill="#fff"/>
<rect x="102" y="309" width="1" height="1" fill="#ff0000"/>
<rect x="104" y="309" width="1" height="1" fill="#ff0000"/>
<rect x="103" y="308" width="1" height="1" fill="#ff0000"/>
<rect x="103" y="310" width="1" height="1" fill="#ff0000"/>
<rect x="92" y="329" width="1" height="1" fill="#fff"/>
<rect x="91" y="329" width="1" height="1" fill="#ff0000"/>
<rect x="93" y="329" width="1" height="1" fill="#ff0000"/>
<rect x="92" y="328" width="1" height="1" fill="#ff0000"/>
<rect x="92" y="330" width="1" height="1" fill="#ff0000"/>
<rect x="140.5" y="307.5" width="18" height="18" stroke="#000" stroke-width="1" fill="none" />
<line x1="136.5" y1="316.5" x2="140.5" y2="316.5" stroke="#000" stroke-width="1"/>
<line x1="158.5" y1="316.5" x2="162" y2="316.5" stroke="#000" stroke-width="1"/>
<rect x="147.5" y="312.5" width="4" height="8" stroke="#000" stroke-width="1" fill="none" />
<line x1="149.5" y1="309" x2="149.5" y2="312.5" stroke="#000" stroke-width="1"/>
<line x1="149.5" y1="320.5" x2="149.5" y2="324" stroke="#000" stroke-width="1"/>
<rect x="135" y="316" width="1" height="1" fill="#fff"/>
<rect x="134" y="316" width="1" height="1" fill="#ff0000"/>
<rect x="136" y="316" width="1" height="1" fill="#ff0000"/>
<rect x="135" y="315" width="1" height="1" fill="#ff0000"/>
<rect x="135" y="317" width="1" height="1" fill="#ff0000"/>
<rect x="163" y="316" width="1" height="1" fill="#fff"/>
<rect x="162" y="316" width="1" height="1" fill="#ff0000"/>
<rect x="164" y="316" width="1" height="1" fill="#ff0000"/>
<rect x="163" y="315" width="1" height="1" fill="#ff0000"/>
<rect x="163" y="317" width="1" height="1" fill="#ff0000"/>
<path d="M206.5 305 L206.5 327.5 L222.5 316.5 Z" stroke="#000" stroke-width="1" fill="none" />
<line x1="203" y1="316.5" x2="206.5" y2="316.5" stroke="#000" stroke-width="1"/>
<line x1="222.5" y1="316.5" x2="226" y2="316.5" stroke="#000" stroke-width="1"/>
<rect x="201" y="316" width="1" height="1" fill="#fff"/>
<rect x="200" y="316" width="1" height="1" fill="#ff0000"/>
<rect x="202" y="316" width="1" height="1" fill="#ff0000"/>
<rect x="201" y="315" width="1" height="1" fill="#ff0000"/>
<rect x="201" y="317" width="1" height="1" fill="#ff0000"/>
<rect x="227" y="316" width="1" height="1" fill="#fff"/>
<rect x="226" y="316" width="1" height="1" fill="#ff0000"/>
<rect x="228" y="316" width="1" height="1" fill="#ff0000"/>
<rect x="227" y="315" width="1" height="1" fill="#ff0000"/>
<rect x="227" y="317" width="1" height="1" fill="#ff0000"/>
<rect x="27.5" y="361.5" width="18" height="18" stroke="#000" stroke-width="1" fill="none" />
<line x1="24" y1="370.5" x2="27.5" y2="370.5" stroke="#000" stroke-width="1"/>
<line x1="45.5" y1="370.5" x2="49" y2="370.5" stroke="#000" stroke-width="1"/>
<path d="M31 369 L37 369 L37 366.5 L42 370.5 L37 374.5 L37 372 L31 372 Z" stroke="#000" stroke-width="1" fill="#000" />
<rect x="22" y="370" width="1" height="1" fill="#fff"/>
<rect x="21" y="370" width="1" height="1" fill="#ff0000"/>
<rect x="23" y="370" width="1" height="1" fill="#ff0000"/>
<rect x="22" y="369" width="1" height="1" fill="#ff0000"/>
<rect x="22" y="371" width="1" height="1" fill="#ff0000"/>
<rect x="50" y="370" width="1" height="1" fill="#fff"/>
<rect x="49" y="370" width="1" height="1" fill="#ff0000"/>
<rect x="51" y="370" width="1" height="1" fill="#ff0000"/>
<rect x="50" y="369" width="1" height="1" fill="#ff0000"/>
<rect x="50" y="371" width="1" height="1" fill="#ff0000"/>
<circle cx="94.5" cy="368.5" r="9" stroke="#000" stroke-width="1" fill="none"/>
<line x1="82" y1="368.5" x2="85.5" y2="368.5" stroke="#000" stroke-width="1"/>
<line x1="103.5" y1="368.5" x2="107" y2="368.5" stroke="#000" stroke-width="1"/>
<line x1="94.5" y1="377.5" x2="94.5" y2="381" stroke="#000" stroke-width="1"/>
<path d="M89.5 371 A5 5 0 1 1 99.5 369" stroke="#000" stroke-width="1" fill="none" />
<path d="M97.5 368 L99.5 371 L101.5 368 Z" stroke="#000" stroke-width="1" fill="#000" />
<rect x="80" y="368" width="1" height="1" fill="#fff"/>
<rect x="79" y="368" width="1" height="1" fill="#ff0000"/>
<rect x="81" y="368" width="1" height="1" fill="#ff0000"/>
<rect x="80" y="367" width="1" height="1" fill="#ff0000"/>
<rect x="80" y="369" width="1" height="1" fill="#ff0000"/>
<rect x="108" y="368" width="1" height="1" fill="#fff"/>
<rect x="107" y="368" width="1" height="1" fill="#ff0000"/>
<rect x="109" y="368" width="1" height="1" fill="#ff0000"/>
<rect x="108" y="367" width="1" height="1" fill="#ff0000"/>
<rect x="108" y="369" width="1" height="1" fill="#ff0000"/>
<rect x="94" y="382" width="1" height="1" fill="#fff"/>
<rect x="93" y="382" width="1" height="1" fill="#ff0000"/>
<rect x="95" y="382" width="1" height="1" fill="#ff0000"/>
<rect x="94" y="381" width="1" height="1" fill="#ff0000"/>
<rect x="94" y="383" width="1" height="1" fill="#ff0000"/>
<path d="M141.5 362.5 L148.5 362.5 L148.5 378.5 L141.5 378.5 M166 362.5 L159.5 362.5 L159.5 378.5 L166 378.5" stroke="#000" stroke-width="1" fill="none" />
<path d="M148.5 366 A4 4.5 0 0 1 148.5 375 M159.5 366 A4 4.5 0 0 0 159.5 375" stroke="#000" stroke-width="1" fill="none" shape-rendering="geometricPrecision"/>
<rect x="140" y="362" width="1" height="1" fill="#fff"/>
<rect x="139" y="362" width="1" height="1" fill="#ff0000"/>
<rect x="141" y="362" width="1" height="1" fill="#ff0000"/>
<rect x="140" y="361" width="1" height="1" fill="#ff0000"/>
<rect x="140" y="363" width="1" height="1" fill="#ff0000"/>
<rect x="167" y="362" width="1" height="1" fill="#fff"/>
<rect x="166" y="362" width="1" height="1" fill="#ff0000"/>
<rect x="168" y="362" width="1" height="1" fill="#ff0000"/>
<rect x="167" y="361" width="1" height="1" fill="#ff0000"/>
<rect x="167" y="363" width="1" height="1" fill="#ff0000"/>
<rect x="140" y="378" width="1" height="1" fill="#fff"/>
<rect x="139" y="378" width="1" height="1" fill="#ff0000"/>
<rect x="141" y="378" width="1" height="1" fill="#ff0000"/>
<rect x="140" y="377" width="1" height="1" fill="#ff0000"/>
<rect x="140" y="379" width="1" height="1" fill="#ff0000"/>
<rect x="167" y="378" width="1" height="1" fill="#fff"/>
<rect x="166" y="378" width="1" height="1" fill="#ff0000"/>
<rect x="168" y="378" width="1" height="1" fill="#ff0000"/>
<rect x="167" y="377" width="1" height="1" fill="#ff0000"/>
<rect x="167" y="379" width="1" height="1" fill="#ff0000"/>
<rect x="45.5" y="415.5" width="18" height="18" stroke="#000" stroke-width="1" fill="none" />
<line x1="42" y1="424.5" x2="45.5" y2="424.5" stroke="#000" stroke-width="1"/>
<line x1="63.5" y1="424.5" x2="67" y2="424.5" stroke="#000" stroke-width="1"/>
<ellipse cx="54.5" cy="424.5" rx="5" ry="4.5" stroke="#000" stroke-width="1" fill="none"/>
<line x1="49.5" y1="430" x2="59.5" y2="419" stroke="#000" stroke-width="1"/>
<rect x="40" y="424" width="1" height="1" fill="#fff"/>
<rect x="39" y="424" width="1" height="1" fill="#ff0000"/>
<rect x="41" y="424" width="1" height="1" fill="#ff0000"/>
<rect x="40" y="423" width="1" height="1" fill="#ff0000"/>
<rect x="40" y="425" width="1" height="1" fill="#ff0000"/>
<rect x="68" y="424" width="1" height="1" fill="#fff"/>
<rect x="67" y="424" width="1" height="1" fill="#ff0000"/>
<rect x="69" y="424" width="1" height="1" fill="#ff0000"/>
<rect x="68" y="423" width="1" height="1" fill="#ff0000"/>
<rect x="68" y="425" width="1" height="1" fill="#ff0000"/>
<rect x="133.5" y="413.5" width="20" height="22" stroke="#000" stroke-width="1" fill="none" />
<rect x="135.5" y="415.5" width="16" height="12" stroke="#000" stroke-width="1" fill="none" />
<line x1="131" y1="431.5" x2="156.5" y2="431.5" stroke="#000" stroke-width="1"/>
<path d="M142.5 429.5 L146 431.5 L142.5 433.5 Z" stroke="#000" stroke-width="1" fill="#000" />
<path d="M138 421 Q143 417 149 421" stroke="#000" stroke-width="1" fill="none" />
<line x1="141" y1="419" x2="144" y2="426.5" stroke="#000" stroke-width="1.2"/>
<path d="M143 426.5 L145 426.5 L144.5 424 Z" stroke="#000" stroke-width="1" fill="#000" />
<rect x="129" y="431" width="1" height="1" fill="#fff"/>
<rect x="128" y="431" width="1" height="1" fill="#ff0000"/>
<rect x="130" y="431" width="1" height="1" fill="#ff0000"/>
<rect x="129" y="430" width="1" height="1" fill="#ff0000"/>
<rect x="129" y="432" width="1" height="1" fill="#ff0000"/>
<rect x="158" y="431" width="1" height="1" fill="#fff"/>
<rect x="157" y="431" width="1" height="1" fill="#ff0000"/>
<rect x="159" y="431" width="1" height="1" fill="#ff0000"/>
<rect x="158" y="430" width="1" height="1" fill="#ff0000"/>
<rect x="158" y="432" width="1" height="1" fill="#ff0000"/></svg>
<div style="left:12px;top:158px;width:53px;height:14px;background:#000"></div>
<div style="left:12px;top:158px;width:53px;height:14px;border:1px dotted #fff"></div>
<span class="t" style="left:14px;top:156.50px;font-size:13px;line-height:16px;font-family:'Liberation Sans';color:#fff">Resistor</span>
<span class="t" style="left:72px;top:156.50px;font-size:13px;line-height:16px;font-family:'Liberation Sans';">Resistor US</span>
<span class="t" style="left:152px;top:156.50px;font-size:13px;line-height:16px;font-family:'Liberation Sans';">Capacitor</span>
<span class="t" style="left:14px;top:210.50px;font-size:13px;line-height:16px;font-family:'Liberation Sans';">Inductor</span>
<span class="t" style="left:70px;top:210.50px;font-size:13px;line-height:16px;font-family:'Liberation Sans';">Ground</span>
<span class="t" style="left:122px;top:210.50px;font-size:13px;line-height:16px;font-family:'Liberation Sans';">Subcircuit Port</span>
<span class="t" style="left:15px;top:264.50px;font-size:13px;line-height:16px;font-family:'Liberation Sans';">Transformer</span>
<span class="t" style="left:96px;top:264.50px;font-size:13px;line-height:16px;font-family:'Liberation Sans';">symmetric</span>
<span class="t" style="left:95px;top:279.50px;font-size:13px;line-height:16px;font-family:'Liberation Sans';">Transformer</span>
<span class="t" style="left:173px;top:264.50px;font-size:13px;line-height:16px;font-family:'Liberation Sans';">dc Block</span>
<span class="t" style="left:13px;top:333.50px;font-size:13px;line-height:16px;font-family:'Liberation Sans';">dc Feed</span>
<span class="t" style="left:71px;top:333.50px;font-size:13px;line-height:16px;font-family:'Liberation Sans';">Bias T</span>
<span class="t" style="left:119px;top:333.50px;font-size:13px;line-height:16px;font-family:'Liberation Sans';">Attenuator</span>
<span class="t" style="left:189px;top:333.50px;font-size:13px;line-height:16px;font-family:'Liberation Sans';">Amplifier</span>
<span class="t" style="left:14px;top:387.50px;font-size:13px;line-height:16px;font-family:'Liberation Sans';">Isolator</span>
<span class="t" style="left:67px;top:387.50px;font-size:13px;line-height:16px;font-family:'Liberation Sans';">Circulator</span>
<span class="t" style="left:131px;top:387.50px;font-size:13px;line-height:16px;font-family:'Liberation Sans';">Gyrator</span>
<span class="t" style="left:14px;top:441.50px;font-size:13px;line-height:16px;font-family:'Liberation Sans';">Phase Shifter</span>
<span class="t" style="left:102px;top:441.50px;font-size:13px;line-height:16px;font-family:'Liberation Sans';">Current Probe</span>
<div style="left:248px;top:71px;width:1px;height:590px;background:#ffffff"></div>
<div style="left:252px;top:71px;width:1px;height:590px;background:#000"></div>
<div style="left:253px;top:96px;width:1px;height:563px;background:#a0a0a0"></div>
<div style="left:253px;top:72px;width:94px;height:24px;background:#c0c0c0"></div>
<div style="left:254px;top:71px;width:92px;height:1px;background:#ffffff"></div>
<div style="left:253px;top:72px;width:1px;height:24px;background:#ffffff"></div>
<div style="left:346px;top:72px;width:1px;height:24px;background:#000"></div>
<span class="t" style="left:261px;top:73.29px;font-size:13.6px;line-height:16px;font-family:'Liberation Sans';">stability.sch</span>
<div style="left:253px;top:95px;width:734px;height:1px;background:#808080"></div>
<div style="left:254px;top:96px;width:732px;height:564px;background:#000"></div>
<div style="left:255px;top:97px;width:714px;height:546px;background:#fff"></div>
<svg style="left:255px;top:97px" width="714" height="546" shape-rendering="crispEdges">
<defs><pattern id="dots" x="0" y="3" width="20" height="20" patternUnits="userSpaceOnUse"><rect x="0" y="0" width="1" height="1" fill="#000"/></pattern></defs>
<rect x="0" y="0" width="714" height="546" fill="url(#dots)"/>
</svg>
<svg style="left:255px;top:97px" width="714" height="546" viewBox="255 97 714 546" shape-rendering="crispEdges"><line x1="535" y1="170" x2="555" y2="170" stroke="#000080" stroke-width="2"/>
<line x1="535" y1="169" x2="535" y2="260" stroke="#000080" stroke-width="2"/>
<line x1="615" y1="170" x2="635" y2="170" stroke="#000080" stroke-width="2"/>
<line x1="695" y1="170" x2="715" y2="170" stroke="#000080" stroke-width="2"/>
<line x1="715" y1="169" x2="715" y2="290" stroke="#000080" stroke-width="2"/>
<line x1="455" y1="260" x2="595" y2="260" stroke="#000080" stroke-width="2"/>
<line x1="665" y1="290" x2="755" y2="290" stroke="#000080" stroke-width="2"/>
<line x1="575" y1="320" x2="595" y2="320" stroke="#000080" stroke-width="2"/>
<line x1="575" y1="319" x2="575" y2="380" stroke="#000080" stroke-width="2"/>
<line x1="555" y1="170" x2="567" y2="170" stroke="#000080" stroke-width="2"/>
<line x1="603" y1="170" x2="615" y2="170" stroke="#000080" stroke-width="2"/>
<path d="M567 170 L570 164 L576 176 L582 164 L588 176 L594 164 L600 176 L603 170" stroke="#000080" stroke-width="2" fill="none" />
<line x1="635" y1="170" x2="661" y2="170" stroke="#000080" stroke-width="2"/>
<line x1="669" y1="170" x2="695" y2="170" stroke="#000080" stroke-width="2"/>
<line x1="661" y1="159" x2="661" y2="181" stroke="#000080" stroke-width="4"/>
<line x1="669" y1="159" x2="669" y2="181" stroke="#000080" stroke-width="4"/>
<line x1="595" y1="260" x2="605" y2="260" stroke="#000080" stroke-width="2"/>
<line x1="595" y1="320" x2="605" y2="320" stroke="#000080" stroke-width="2"/>
<line x1="645" y1="290" x2="665" y2="290" stroke="#000080" stroke-width="2"/>
<path d="M605 250 L605 330 L645 290 Z" stroke="#000080" stroke-width="2" fill="none" />
<line x1="575" y1="380" x2="575" y2="392" stroke="#000080" stroke-width="2"/>
<line x1="575" y1="428" x2="575" y2="440" stroke="#000080" stroke-width="2"/>
<path d="M575 392 A6 6 0 0 0 575 404 A6 6 0 0 0 575 416 A6 6 0 0 0 575 428" stroke="#000080" stroke-width="2" fill="none" />
<line x1="575" y1="440" x2="575" y2="450" stroke="#000080" stroke-width="2"/>
<line x1="564" y1="450" x2="586" y2="450" stroke="#000080" stroke-width="3"/>
<line x1="568" y1="456" x2="582" y2="456" stroke="#000080" stroke-width="3"/>
<line x1="572" y1="462" x2="578" y2="462" stroke="#000080" stroke-width="3"/>
<line x1="455" y1="260" x2="455" y2="271" stroke="#000080" stroke-width="2"/>
<rect x="450" y="271" width="10" height="16" stroke="#000080" stroke-width="2" fill="none"/>
<line x1="455" y1="287" x2="455" y2="291" stroke="#000080" stroke-width="2"/>
<circle cx="455.5" cy="300.5" r="8.5" stroke="#000080" stroke-width="2" fill="none"/>
<path d="M449 299 Q452 293 455 300 Q458 307 461 300" stroke="#000080" stroke-width="2" fill="none" />
<line x1="455" y1="309" x2="455" y2="320" stroke="#000080" stroke-width="2"/>
<rect x="444.5" y="268.5" width="22" height="44" stroke="#808080" stroke-width="1" fill="none"/>
<line x1="460" y1="265.5" x2="466" y2="265.5" stroke="#ff0000" stroke-width="1"/>
<line x1="463.5" y1="262" x2="463.5" y2="268" stroke="#ff0000" stroke-width="1"/>
<line x1="460" y1="315.5" x2="466" y2="315.5" stroke="#000" stroke-width="1"/>
<rect x="453" y="258" width="4" height="4" fill="#000080"/>
<rect x="453" y="318" width="4" height="4" fill="#000080"/>
<line x1="455" y1="320" x2="455" y2="330" stroke="#000080" stroke-width="2"/>
<line x1="444" y1="330" x2="466" y2="330" stroke="#000080" stroke-width="3"/>
<line x1="448" y1="336" x2="462" y2="336" stroke="#000080" stroke-width="3"/>
<line x1="452" y1="342" x2="458" y2="342" stroke="#000080" stroke-width="3"/>
<line x1="755" y1="290" x2="755" y2="301" stroke="#000080" stroke-width="2"/>
<rect x="750" y="301" width="10" height="16" stroke="#000080" stroke-width="2" fill="none"/>
<line x1="755" y1="317" x2="755" y2="321" stroke="#000080" stroke-width="2"/>
<circle cx="755.5" cy="330.5" r="8.5" stroke="#000080" stroke-width="2" fill="none"/>
<path d="M749 329 Q752 323 755 330 Q758 337 761 330" stroke="#000080" stroke-width="2" fill="none" />
<line x1="755" y1="339" x2="755" y2="350" stroke="#000080" stroke-width="2"/>
<rect x="744.5" y="298.5" width="22" height="44" stroke="#808080" stroke-width="1" fill="none"/>
<line x1="760" y1="295.5" x2="766" y2="295.5" stroke="#ff0000" stroke-width="1"/>
<line x1="763.5" y1="292" x2="763.5" y2="298" stroke="#ff0000" stroke-width="1"/>
<line x1="760" y1="345.5" x2="766" y2="345.5" stroke="#000" stroke-width="1"/>
<rect x="753" y="288" width="4" height="4" fill="#000080"/>
<rect x="753" y="348" width="4" height="4" fill="#000080"/>
<line x1="755" y1="350" x2="755" y2="360" stroke="#000080" stroke-width="2"/>
<line x1="744" y1="360" x2="766" y2="360" stroke="#000080" stroke-width="3"/>
<line x1="748" y1="366" x2="762" y2="366" stroke="#000080" stroke-width="3"/>
<line x1="752" y1="372" x2="758" y2="372" stroke="#000080" stroke-width="3"/>
<rect x="553" y="168" width="4" height="4" fill="#000080"/>
<rect x="613" y="168" width="4" height="4" fill="#000080"/>
<rect x="633" y="168" width="4" height="4" fill="#000080"/>
<rect x="693" y="168" width="4" height="4" fill="#000080"/>
<rect x="593" y="258" width="4" height="4" fill="#000080"/>
<rect x="593" y="318" width="4" height="4" fill="#000080"/>
<rect x="663" y="288" width="4" height="4" fill="#000080"/>
<rect x="573" y="378" width="4" height="4" fill="#000080"/>
<rect x="573" y="438" width="4" height="4" fill="#000080"/>
<circle cx="535" cy="260" r="3.6" fill="#000080" shape-rendering="geometricPrecision"/>
<circle cx="715" cy="290" r="3.6" fill="#000080" shape-rendering="geometricPrecision"/>
<line x1="302" y1="381" x2="302" y2="399" stroke="#000080" stroke-width="2"/>
<line x1="301" y1="398" x2="371" y2="398" stroke="#000080" stroke-width="2"/>
<path d="M429 375 L526 375 L526 414 L429 414 Z" stroke="#000080" stroke-width="2" fill="none" />
<path d="M526 375 L531 380 L531 419 L434 419 L429 414 M526 414 L531 419" stroke="#000080" stroke-width="2" fill="none" /></svg>
<div style="left:255px;top:140px;width:4px;height:1px;background:#000"></div>
<div style="left:255px;top:137px;width:1px;height:7px;background:#000"></div>
<span class="t" style="left:473px;top:262.50px;font-size:13px;line-height:16px;font-family:'Liberation Sans';">P1</span>
<span class="t" style="left:473px;top:277.50px;font-size:13px;line-height:16px;font-family:'Liberation Sans';">Num=1</span>
<span class="t" style="left:473px;top:292.50px;font-size:13px;line-height:16px;font-family:'Liberation Sans';">Z=50 Ohm</span>
<span class="t" style="left:773px;top:292.50px;font-size:13px;line-height:16px;font-family:'Liberation Sans';">P2</span>
<span class="t" style="left:773px;top:307.50px;font-size:13px;line-height:16px;font-family:'Liberation Sans';">Num=2</span>
<span class="t" style="left:773px;top:322.50px;font-size:13px;line-height:16px;font-family:'Liberation Sans';">Z=50 Ohm</span>
<span class="t" style="left:559px;top:183.50px;font-size:13px;line-height:16px;font-family:'Liberation Sans';">R1</span>
<span class="t" style="left:559px;top:198.50px;font-size:13px;line-height:16px;font-family:'Liberation Sans';">R=992.19</span>
<span class="t" style="left:639px;top:185.50px;font-size:13px;line-height:16px;font-family:'Liberation Sans';">C1</span>
<span class="t" style="left:639px;top:200.50px;font-size:13px;line-height:16px;font-family:'Liberation Sans';">C=2 pF</span>
<span class="t" style="left:605px;top:332.50px;font-size:13px;line-height:16px;font-family:'Liberation Sans';">SUB1</span>
<span class="t" style="left:605px;top:347.50px;font-size:13px;line-height:16px;font-family:'Liberation Sans';">File=fet_sub.sch</span>
<span class="t" style="left:585px;top:383.50px;font-size:13px;line-height:16px;font-family:'Liberation Sans';">L1</span>
<span class="t" style="left:585px;top:398.50px;font-size:13px;line-height:16px;font-family:'Liberation Sans';">L=95.475 pH</span>
<span class="t" style="left:312px;top:400.50px;font-size:13px;line-height:16px;font-family:'Liberation Sans';">Eqn1</span>
<span class="t" style="left:312px;top:415.50px;font-size:13px;line-height:16px;font-family:'Liberation Sans';">StabK=Rollet(S)</span>
<span class="t" style="left:312px;top:430.50px;font-size:13px;line-height:16px;font-family:'Liberation Sans';">det=abs(det(S))</span>
<span class="t" style="left:312px;top:445.50px;font-size:13px;line-height:16px;font-family:'Liberation Sans';">Mu=Mu(S)</span>
<span class="t" style="left:312px;top:460.50px;font-size:13px;line-height:16px;font-family:'Liberation Sans';">Mu2=Mu2(S)</span>
<span class="t" style="left:435px;top:429.50px;font-size:13px;line-height:16px;font-family:'Liberation Sans';">SP1</span>
<span class="t" style="left:435px;top:444.50px;font-size:13px;line-height:16px;font-family:'Liberation Sans';">Type=lin</span>
<span class="t" style="left:435px;top:459.50px;font-size:13px;line-height:16px;font-family:'Liberation Sans';">Start=1 GHz</span>
<span class="t" style="left:435px;top:474.50px;font-size:13px;line-height:16px;font-family:'Liberation Sans';">Stop=30 GHz</span>
<span class="t" style="left:435px;top:489.50px;font-size:13px;line-height:16px;font-family:'Liberation Sans';">Points=101</span>
<span class="t" style="left:306px;top:376.18px;font-size:16.8px;line-height:20px;font-family:'Liberation Sans';">Equation</span>
<span class="t" style="left:435px;top:377.91px;font-size:14.7px;line-height:18px;font-family:'Liberation Sans';font-weight:bold;color:#000080">S parameter</span>
<span class="t" style="left:435px;top:392.91px;font-size:14.7px;line-height:18px;font-family:'Liberation Sans';font-weight:bold;color:#000080">simulation</span>
<div style="left:969px;top:97px;width:17px;height:563px;background:#e8e8e8"></div>
<div style="left:969px;top:98px;width:16px;height:545px;background:#000"></div>
<div style="left:970px;top:98px;width:14px;height:10px;background:#a0a0a4"></div>
<div style="left:970px;top:98px;width:14px;height:1px;background:#505050"></div>
<div style="left:970px;top:98px;width:1px;height:10px;background:#707070"></div>
<div style="left:983px;top:98px;width:1px;height:10px;background:#d0d0d0"></div>
<div style="left:970px;top:109px;width:14px;height:324px;background:#c0c0c0"></div>
<div style="left:970px;top:109px;width:14px;height:1px;background:#ffffff"></div>
<div style="left:970px;top:109px;width:1px;height:324px;background:#ffffff"></div>
<div style="left:983px;top:110px;width:1px;height:323px;background:#dcdcdc"></div>
<div style="left:971px;top:432px;width:13px;height:1px;background:#dcdcdc"></div>
<div style="left:970px;top:434px;width:14px;height:177px;background:#a0a0a4"></div>
<div style="left:970px;top:434px;width:14px;height:1px;background:#505050"></div>
<div style="left:970px;top:434px;width:1px;height:177px;background:#707070"></div>
<div style="left:983px;top:434px;width:1px;height:177px;background:#d0d0d0"></div>
<div style="left:970px;top:612px;width:14px;height:14px;background:#c0c0c0"></div>
<div style="left:970px;top:612px;width:14px;height:1px;background:#ffffff"></div>
<div style="left:970px;top:612px;width:1px;height:14px;background:#ffffff"></div>
<div style="left:983px;top:613px;width:1px;height:13px;background:#dcdcdc"></div>
<div style="left:971px;top:625px;width:13px;height:1px;background:#dcdcdc"></div>
<div style="left:970px;top:627px;width:14px;height:15px;background:#c0c0c0"></div>
<div style="left:970px;top:627px;width:14px;height:1px;background:#ffffff"></div>
<div style="left:970px;top:627px;width:1px;height:15px;background:#ffffff"></div>
<div style="left:983px;top:628px;width:1px;height:14px;background:#dcdcdc"></div>
<div style="left:971px;top:641px;width:13px;height:1px;background:#dcdcdc"></div>
<div style="left:972px;top:266px;width:9px;height:1px;background:#ffffff"></div>
<div style="left:973px;top:267px;width:9px;height:1px;background:#808080"></div>
<div style="left:972px;top:268px;width:9px;height:1px;background:#ffffff"></div>
<div style="left:973px;top:269px;width:9px;height:1px;background:#808080"></div>
<div style="left:972px;top:270px;width:9px;height:1px;background:#ffffff"></div>
<div style="left:973px;top:271px;width:9px;height:1px;background:#808080"></div>
<div style="left:972px;top:272px;width:9px;height:1px;background:#ffffff"></div>
<div style="left:973px;top:273px;width:9px;height:1px;background:#808080"></div>
<div style="left:972px;top:274px;width:9px;height:1px;background:#ffffff"></div>
<div style="left:973px;top:275px;width:9px;height:1px;background:#808080"></div>
<svg style="left:970px;top:612px" width="14" height="30" shape-rendering="crispEdges"><path d="M3 9 L10 9 L6.5 5 Z" fill="#000"/><path d="M3 20 L10 20 L6.5 24 Z" fill="#000"/></svg>
<div style="left:255px;top:643px;width:1px;height:16px;background:#e8e8e8"></div>
<div style="left:256px;top:643px;width:713px;height:16px;background:#000"></div>
<div style="left:257px;top:644px;width:606px;height:14px;background:#c0c0c0"></div>
<div style="left:257px;top:644px;width:606px;height:1px;background:#ffffff"></div>
<div style="left:257px;top:644px;width:1px;height:14px;background:#ffffff"></div>
<div style="left:862px;top:645px;width:1px;height:13px;background:#dcdcdc"></div>
<div style="left:258px;top:657px;width:605px;height:1px;background:#dcdcdc"></div>
<div style="left:555px;top:646px;width:1px;height:9px;background:#ffffff"></div>
<div style="left:556px;top:647px;width:1px;height:9px;background:#808080"></div>
<div style="left:557px;top:646px;width:1px;height:9px;background:#ffffff"></div>
<div style="left:558px;top:647px;width:1px;height:9px;background:#808080"></div>
<div style="left:559px;top:646px;width:1px;height:9px;background:#ffffff"></div>
<div style="left:560px;top:647px;width:1px;height:9px;background:#808080"></div>
<div style="left:561px;top:646px;width:1px;height:9px;background:#ffffff"></div>
<div style="left:562px;top:647px;width:1px;height:9px;background:#808080"></div>
<div style="left:563px;top:646px;width:1px;height:9px;background:#ffffff"></div>
<div style="left:564px;top:647px;width:1px;height:9px;background:#808080"></div>
<div style="left:865px;top:644px;width:72px;height:14px;background:#a0a0a4"></div>
<div style="left:865px;top:644px;width:72px;height:1px;background:#505050"></div>
<div style="left:865px;top:644px;width:1px;height:14px;background:#505050"></div>
<div style="left:865px;top:657px;width:72px;height:1px;background:#dcdcdc"></div>
<div style="left:938px;top:644px;width:14px;height:14px;background:#c0c0c0"></div>
<div style="left:938px;top:644px;width:14px;height:1px;background:#ffffff"></div>
<div style="left:938px;top:644px;width:1px;height:14px;background:#ffffff"></div>
<div style="left:951px;top:645px;width:1px;height:13px;background:#dcdcdc"></div>
<div style="left:939px;top:657px;width:13px;height:1px;background:#dcdcdc"></div>
<div style="left:954px;top:644px;width:14px;height:14px;background:#c0c0c0"></div>
<div style="left:954px;top:644px;width:14px;height:1px;background:#ffffff"></div>
<div style="left:954px;top:644px;width:1px;height:14px;background:#ffffff"></div>
<div style="left:967px;top:645px;width:1px;height:13px;background:#dcdcdc"></div>
<div style="left:955px;top:657px;width:13px;height:1px;background:#dcdcdc"></div>
<svg style="left:938px;top:644px" width="30" height="14" shape-rendering="crispEdges"><path d="M8 3.5 L8 11 L4 7.2 Z" fill="#000"/><path d="M21 3.5 L21 11 L25 7.2 Z" fill="#000"/></svg>
<div style="left:255px;top:659px;width:731px;height:1px;background:#f4f4f4"></div>
<div style="left:255px;top:660px;width:731px;height:1px;background:#e0e0e0"></div>
<div style="left:985px;top:97px;width:1px;height:563px;background:#f4f4f4"></div>
<div style="left:969px;top:643px;width:16px;height:16px;background:#c0c0c0"></div>
<svg style="left:970px;top:664px" width="17" height="17" shape-rendering="crispEdges"><path d="M4 16 L16 4" stroke="#fff" stroke-width="1"/><path d="M5 16 L16 5" stroke="#808080" stroke-width="1"/><path d="M6 16 L16 6" stroke="#808080" stroke-width="1"/><path d="M8 16 L16 8" stroke="#fff" stroke-width="1"/><path d="M9 16 L16 9" stroke="#808080" stroke-width="1"/><path d="M10 16 L16 10" stroke="#808080" stroke-width="1"/><path d="M12 16 L16 12" stroke="#fff" stroke-width="1"/><path d="M13 16 L16 13" stroke="#808080" stroke-width="1"/><path d="M14 16 L16 14" stroke="#808080" stroke-width="1"/></svg>
</body></html>
